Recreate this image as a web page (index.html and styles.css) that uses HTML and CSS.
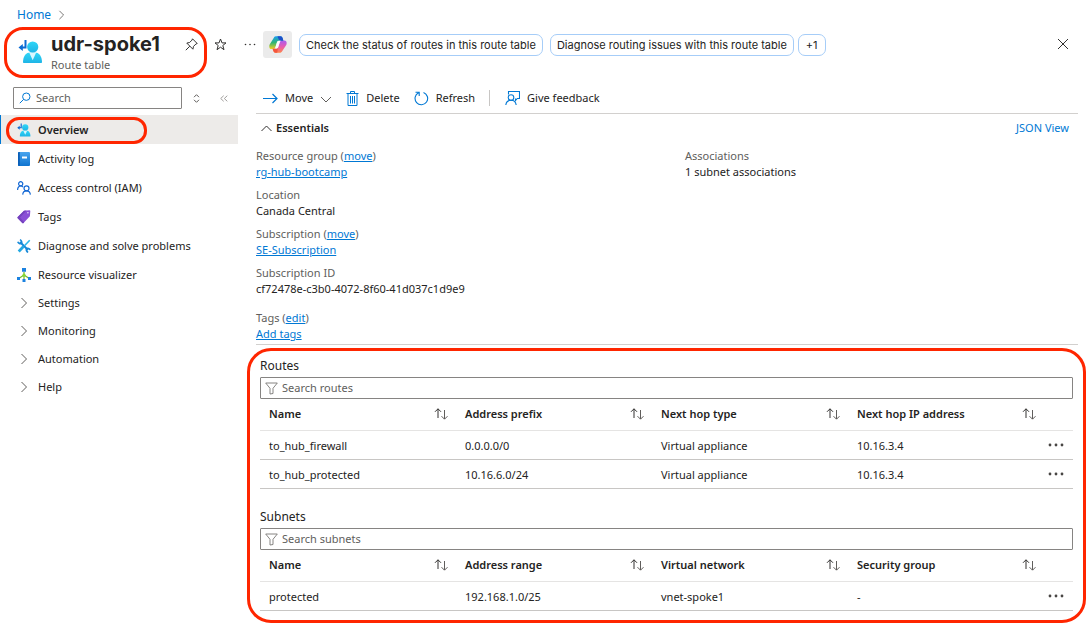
FILE: index.html
```html
<!DOCTYPE html>
<html lang="en">
<head>
<meta charset="utf-8">
<title>udr-spoke1 - Route table</title>
<link rel="stylesheet" href="styles.css">
</head>
<body>
<svg class="defs" aria-hidden="true">
  <defs>
    <linearGradient id="person" x1="0" y1="0" x2="0" y2="1"><stop offset="0" stop-color="#2fd6f7"/><stop offset="1" stop-color="#1fb4e6"/></linearGradient>
    <linearGradient id="blue" x1="0" y1="0" x2="0" y2="1"><stop offset="0" stop-color="#4aa5ee"/><stop offset="1" stop-color="#0f74d0"/></linearGradient>
    <linearGradient id="copilotA" x1="0" y1="0" x2="0" y2="1"><stop offset="0" stop-color="#1b9df0"/><stop offset=".5" stop-color="#2fb573"/><stop offset="1" stop-color="#f4cf1f"/></linearGradient>
    <linearGradient id="copilotB" x1="0" y1="0" x2="0" y2="1"><stop offset="0" stop-color="#a95cf0"/><stop offset=".5" stop-color="#e85bb0"/><stop offset="1" stop-color="#ff8548"/></linearGradient>
    <symbol id="i-route" viewBox="0 0 25 25">
      <path d="M7.500 1v7.500H2.500" fill="none" stroke="#0b6bd3" stroke-width="2"/>
      <path d="M.5 8.500 4.800 5v7z" fill="#0b6bd3"/>
      <path d="M5 23c0-5 2.500-8.700 5.500-9.200h8c3 .5 5.500 4.200 5.500 9.200 0 .6-.4 1-1 1H6c-.6 0-1-.4-1-1z" fill="url(#person)"/>
      <path d="M11.300 13.800h6.800l-3.400 7.400z" fill="#d9f7ff"/>
      <circle cx="14.700" cy="8" r="5.600" fill="url(#person)"/>
    </symbol>
    <symbol id="i-sort" viewBox="0 0 14 12">
      <path d="M4 10V.8M1 3.800l3-3 3 3" fill="none" stroke="#323130"/>
      <path d="M10.500 2v9M7.500 8.200l3 3 3-3" fill="none" stroke="#605e5c"/>
    </symbol>
    <symbol id="i-filter" viewBox="0 0 13 13"><path d="M.7 1h11.600L8 6.300v5.200L5 12V6.300z" fill="none" stroke="#797775" stroke-width=".9"/></symbol>
    <symbol id="i-more" viewBox="0 0 16 4"><circle cx="2" cy="2" r="1.400"/><circle cx="8" cy="2" r="1.400"/><circle cx="14" cy="2" r="1.400"/></symbol>
    <symbol id="i-chev" viewBox="0 0 8 12"><path d="m1.500 1 5 5-5 5" fill="none" stroke="#605e5c"/></symbol>
  </defs>
</svg>

<nav class="crumbs" aria-label="Breadcrumb">
  <a href="#">Home</a>
  <svg width="7" height="10"><use href="#i-chev"/></svg>
</nav>

<header class="header">
  <div class="title-box">
    <svg width="25" height="25"><use href="#i-route"/></svg>
    <div class="title-text">
      <h1>udr-spoke1</h1>
      <p>Route table</p>
    </div>
    <button class="icon-btn pin" aria-label="Pin">
      <svg width="13" height="13" viewBox="0 0 13 13" fill="none" stroke="#323130"><path d="m7.500.8 4.700 4.700-1.300.5L8.500 8.400l-.6 2.800L1.800 5.100l2.800-.6L7 2.100zM4.800 8.200.8 12.200"/></svg>
    </button>
  </div>
  <button class="icon-btn star" aria-label="Favorite">
    <svg width="13" height="13" viewBox="0 0 13 13" fill="none" stroke="#323130"><path d="m6.500 1 1.500 3.900h4L8.800 7.500l1.200 4.200-3.500-2.500L3 11.700l1.200-4.200L1 4.900h4z"/></svg>
  </button>
  <button class="icon-btn dots" aria-label="More">
    <svg width="12" height="3" viewBox="0 0 12 3" fill="#323130"><circle cx="1.500" cy="1.500" r=".8"/><circle cx="6" cy="1.500" r=".8"/><circle cx="10.500" cy="1.500" r=".8"/></svg>
  </button>
  <button class="copilot" aria-label="Copilot">
    <svg width="18" height="17" viewBox="0 0 18 17">
      <path d="M5 1.500C5.500.5 6.500.3 7.500.3h4c1.200 0 1.800.7 2.200 2l.7 2.400H10c-1.200 0-1.800.7-2.200 2L6.500 11c-.4 1.300-1 2-2.200 2H2.600C.6 13-.2 11.200.5 8.800z" fill="url(#copilotA)"/>
      <path d="M13 15.500c-.5 1-1.500 1.200-2.500 1.200h-4c-1.200 0-1.800-.7-2.200-2L3.600 12.800H7c1.200 0 2-.9 2.400-2.200l1.300-4.200c.4-1.200 1-1.800 2.200-1.800h2.500c2 0 2.700 1.700 2 4.100z" fill="url(#copilotB)"/>
      <path d="M8.500.3h3c1.200 0 1.800.7 2.200 2l.7 2.400h-3.200C9.700 4.700 9.200 2 8.500.3z" fill="#1c50c8"/>
      <path d="M3.600 12.800H7c.8 0 1.400-.4 1.900-1l-.6 4.900H6.500c-1.200 0-1.800-.7-2.200-2z" fill="#f4563c"/>
      <path d="M8.300 5.500c.5-.6 1-.8 1.700-.8h2c-.7.300-1 .9-1.300 1.700l-1.300 4.200c-.3.900-.7 1.500-1.300 1.900h-1c-.3 0-.8-.2-.8-.6l.2-.9 1.300-4.200z" fill="#fff" opacity=".85"/>
    </svg>
  </button>
  <button class="pill">Check the status of routes in this route table</button>
  <button class="pill">Diagnose routing issues with this route table</button>
  <button class="pill count">+1</button>
  <button class="icon-btn close" aria-label="Close">
    <svg width="12" height="12" viewBox="0 0 12 12" stroke="#323130"><path d="m1 1 10 10M11 1 1 11"/></svg>
  </button>
</header>

<div class="body">
  <aside class="sidebar">
    <div class="side-tools">
      <label class="search">
        <svg width="12" height="12" viewBox="0 0 12 12" fill="none" stroke="#0078d4"><circle cx="7.300" cy="4.700" r="3.700"/><path d="M4.600 7.400.8 11.200"/></svg>
        <input type="text" placeholder="Search" aria-label="Search menu">
      </label>
      <button class="icon-btn" aria-label="Expand all"><svg width="7" height="9" viewBox="0 0 7 9" fill="none" stroke="#605e5c"><path d="m1 3.200 2.500-2.500L6 3.200M1 5.800l2.500 2.500L6 5.800"/></svg></button>
      <button class="icon-btn collapse" aria-label="Collapse menu"><svg width="8" height="7" viewBox="0 0 8 7" fill="none" stroke="#a19f9d"><path d="m3.700.7-3 2.800 3 2.800M7.300.7l-3 2.800 3 2.800"/></svg></button>
    </div>
    <nav class="menu" aria-label="Resource menu">
      <a class="item current" href="#"><svg width="14" height="14"><use href="#i-route"/></svg>Overview</a>
      <a class="item" href="#"><svg width="14" height="14" viewBox="0 0 14 14"><rect x="1" width="12" height="14" rx="1" fill="url(#blue)"/><path d="M1 1a1 1 0 0 1 1-1h.8v14H2a1 1 0 0 1-1-1z" fill="#0a5fb8"/><path d="M5 4.500h5v2H5z" fill="#fff"/></svg>Activity log</a>
      <a class="item" href="#"><svg width="14" height="14" viewBox="0 0 14 14" fill="none" stroke="#1267d4" stroke-width="1.200"><circle cx="3.700" cy="2.800" r="2.100"/><path d="M.6 9C.6 6.500 1.800 5 3.700 5c1 0 1.700.3 2.300 1"/><circle cx="9.500" cy="7.300" r="2.500"/><path d="M5.700 13.600c.2-2.500 1.600-3.800 3.800-3.800s3.600 1.300 3.900 3.800"/></svg>Access control (IAM)</a>
      <a class="item" href="#"><svg width="14" height="14" viewBox="0 0 14 14"><path d="M7 .8 12.500.3c.5 0 .8.300.8.800l-.4 5.200L6.500 13c-.4.400-.8.400-1.200 0L.7 8.200c-.4-.4-.4-.8 0-1.200z" fill="#8a4fd6"/><path d="M7 .8 9.500.6 3 7.500l4.200 4.800-.7.700c-.4.400-.8.400-1.200 0L.7 8.200c-.4-.4-.4-.8 0-1.200z" fill="#7442bd"/><circle cx="10.900" cy="2.800" r=".8" fill="#e8dcfa"/></svg>Tags</a>
      <a class="item" href="#"><svg width="14" height="14" viewBox="0 0 14 14" fill="none"><path d="m3 3 8 8" stroke="#1689d8" stroke-width="2"/><path d="M.8 2.800a2.600 2.600 0 0 0 3.800 1.500M2.900.8a2.600 2.600 0 0 1 1.600 3.600M13.200 11a2.600 2.600 0 0 0-3.900-1.300m1.900 3.500a2.600 2.600 0 0 1-1.700-3.500" stroke="#1689d8" stroke-width="1.600"/><path d="M12.700 1.200 7.500 6.800" stroke="#2bb8ea" stroke-width="1.600"/><path d="M6.500 7.600 1.700 12.500" stroke="#23a9e2" stroke-width="2.800"/></svg>Diagnose and solve problems</a>
      <a class="item" href="#"><svg width="14" height="14" viewBox="0 0 14 14"><path d="M7 4v8M1.800 10.500 7 7l5.200 3.500" fill="none" stroke="#76bc2d" stroke-width="1.200"/><circle cx="7" cy="7.200" r="1.600" fill="#86d633"/><path d="M5 0h4v3.800H5zM0 9h3v3H0zM11 9h3v3h-3zM5.500 11h3v3h-3z" fill="#1c82e0"/></svg>Resource visualizer</a>
      <a class="item group" href="#"><svg width="14" height="12"><use href="#i-chev"/></svg>Settings</a>
      <a class="item group" href="#"><svg width="14" height="12"><use href="#i-chev"/></svg>Monitoring</a>
      <a class="item group" href="#"><svg width="14" height="12"><use href="#i-chev"/></svg>Automation</a>
      <a class="item group" href="#"><svg width="14" height="12"><use href="#i-chev"/></svg>Help</a>
    </nav>
  </aside>

  <main class="main">
    <div class="toolbar">
      <button class="tool"><svg width="15" height="11" viewBox="0 0 15 11" fill="none" stroke="#0078d4" stroke-width="1.200"><path d="M0 5.500h14M9.500 1 14 5.500 9.500 10"/></svg>Move<svg class="caret" width="12" height="7" viewBox="0 0 12 7" fill="none" stroke="#605e5c"><path d="m1 1 5 5 5-5"/></svg></button>
      <button class="tool"><svg width="13" height="15" viewBox="0 0 13 15" fill="none" stroke="#0078d4"><path d="M.5 2.500h12M4.500 2.500v-2h4v2M2 2.500v12h9v-12"/><path d="M4.500 5v7.500M6.500 5v7.500M8.500 5v7.500"/></svg>Delete</button>
      <button class="tool"><svg width="15" height="15" viewBox="0 0 15 15" fill="none" stroke="#0078d4" stroke-width="1.100"><path d="M9.500 1.500a6.300 6.300 0 1 1-5 .3M1.500 1.200h3.700v3.700"/></svg>Refresh</button>
      <span class="divider"></span>
      <button class="tool"><svg width="15" height="15" viewBox="0 0 15 15" fill="none" stroke="#0078d4" stroke-width="1.100"><path d="M3.500 3.500v-3h11v7h-2.200L10.500 9.500v-2"/><circle cx="6" cy="6.500" r="2.800"/><path d="M.8 14c.4-3 2.300-4.700 5.200-4.700s4.800 1.700 5.200 4.700"/></svg>Give feedback</button>
    </div>

    <section class="essentials">
      <div class="ess-head">
        <button class="ess-toggle"><svg width="11" height="7" viewBox="0 0 11 7" fill="none" stroke="#323130"><path d="m.5 6 5-5 5 5"/></svg>Essentials</button>
        <a class="json" href="#">JSON View</a>
      </div>
      <div class="ess-grid">
        <dl>
          <div><dt>Resource group (<a href="#">move</a>)</dt><dd><a href="#">rg-hub-bootcamp</a></dd></div>
          <div><dt>Location</dt><dd>Canada Central</dd></div>
          <div><dt>Subscription (<a href="#">move</a>)</dt><dd><a href="#">SE-Subscription</a></dd></div>
          <div><dt>Subscription ID</dt><dd>cf72478e-c3b0-4072-8f60-41d037c1d9e9</dd></div>
          <div class="tags"><dt>Tags (<a href="#">edit</a>)</dt><dd><a href="#">Add tags</a></dd></div>
        </dl>
        <dl>
          <div><dt>Associations</dt><dd>1 subnet associations</dd></div>
        </dl>
      </div>
    </section>

    <div class="lists">
      <section>
        <h2>Routes</h2>
        <label class="search wide"><svg width="13" height="13"><use href="#i-filter"/></svg><input type="text" placeholder="Search routes" aria-label="Search routes"></label>
        <table>
          <thead><tr>
            <th><button>Name<svg width="14" height="12"><use href="#i-sort"/></svg></button></th>
            <th><button>Address prefix<svg width="14" height="12"><use href="#i-sort"/></svg></button></th>
            <th><button>Next hop type<svg width="14" height="12"><use href="#i-sort"/></svg></button></th>
            <th><button>Next hop IP address<svg width="14" height="12"><use href="#i-sort"/></svg></button></th>
            <th class="act"></th>
          </tr></thead>
          <tbody>
            <tr><td>to_hub_firewall</td><td>0.0.0.0/0</td><td>Virtual appliance</td><td>10.16.3.4</td><td class="act"><button aria-label="More"><svg width="16" height="4"><use href="#i-more"/></svg></button></td></tr>
            <tr><td>to_hub_protected</td><td>10.16.6.0/24</td><td>Virtual appliance</td><td>10.16.3.4</td><td class="act"><button aria-label="More"><svg width="16" height="4"><use href="#i-more"/></svg></button></td></tr>
          </tbody>
        </table>
      </section>
      <section>
        <h2>Subnets</h2>
        <label class="search wide"><svg width="13" height="13"><use href="#i-filter"/></svg><input type="text" placeholder="Search subnets" aria-label="Search subnets"></label>
        <table>
          <thead><tr>
            <th><button>Name<svg width="14" height="12"><use href="#i-sort"/></svg></button></th>
            <th><button>Address range<svg width="14" height="12"><use href="#i-sort"/></svg></button></th>
            <th><button>Virtual network<svg width="14" height="12"><use href="#i-sort"/></svg></button></th>
            <th><button>Security group<svg width="14" height="12"><use href="#i-sort"/></svg></button></th>
            <th class="act"></th>
          </tr></thead>
          <tbody>
            <tr><td>protected</td><td>192.168.1.0/25</td><td>vnet-spoke1</td><td>-</td><td class="act"><button aria-label="More"><svg width="16" height="4"><use href="#i-more"/></svg></button></td></tr>
          </tbody>
        </table>
      </section>
    </div>
  </main>
</div>
</body>
</html>
```
FILE: styles.css
```css
*, *::after { box-sizing: border-box; }

body {
  margin: 0;
  background: #fff;
  color: #242322;
  font: 11px/16px "Noto Sans", "Open Sans", sans-serif;
}

h1, h2, p, dl, dd { margin: 0; }
a { color: #0078d4; }
svg { flex: none; display: block; }
.defs { position: absolute; width: 0; height: 0; }

button {
  padding: 0;
  border: 0;
  background: none;
  color: inherit;
  font: inherit;
  cursor: pointer;
}

.icon-btn { display: flex; align-items: center; justify-content: center; }

.crumbs {
  display: flex;
  align-items: center;
  gap: 7px;
  padding: 7px 17px 4px;
}
.crumbs a { font-size: 12px; text-decoration: none; }

.header {
  display: flex;
  align-items: flex-start;
  padding-right: 22px;
}
.title-box {
  display: flex;
  align-items: flex-start;
  width: 203px;
  height: 51px;
  margin-left: 4px;
  padding: 1px 6px 0 11px;
  border: 3px solid #ff2600;
  border-radius: 19px;
}
.title-box > svg { margin-top: 8px; }
.title-text { flex: 1; margin-left: 8px; }
.title-text h1 { font: 700 20px/26px Inter, sans-serif; }
.title-text p { line-height: 16px; color: #605e5c; }
.icon-btn { height: 34px; }
.title-box .pin { height: 26px; }
.star { margin-left: 7px; }
.dots { margin-left: 17px; }
.copilot {
  display: grid;
  place-items: center;
  width: 29px;
  height: 27px;
  margin: 4px 7px 0 7px;
  border-radius: 3px;
  background: #ebebeb;
}
.pill {
  height: 22px;
  margin: 7px 7px 0 0;
  padding: 0 6px;
  border: 1px solid #a6cdf8;
  border-radius: 7px;
  font: 11px/16px Inter, sans-serif;
  white-space: nowrap;
}
.pill.count { margin-left: -3px; padding: 0 7px; }
.close { margin-left: auto; }

.body { display: grid; grid-template-columns: 238px 1fr; }

.side-tools { display: flex; align-items: center; padding: 9px 9px 6px 13px; }
.search {
  display: flex;
  align-items: center;
  gap: 5px;
  width: 169px;
  height: 22px;
  padding: 0 5px;
  border: 1px solid #868482;
  border-radius: 1px;
}
.search input {
  flex: 1;
  min-width: 0;
  padding: 0;
  border: 0;
  outline: 0;
  background: none;
  font: inherit;
}
.search input::placeholder { color: #605e5c; opacity: 1; }
.side-tools .icon-btn { height: 22px; margin-left: 11px; }
.side-tools .collapse { margin-left: 20px; }

.item {
  position: relative;
  display: flex;
  align-items: center;
  gap: 7px;
  height: 29px;
  padding-left: 17px;
  color: #242322;
  text-decoration: none;
}
.item.group { height: 28px; }
.item.current { background: #edebe9; font-weight: 600; box-shadow: inset 1px 0 #0078d4; }
.item.current::after {
  content: "";
  position: absolute;
  top: 2px;
  left: 6px;
  width: 141px;
  height: 27px;
  border: 3px solid #ff2600;
  border-radius: 13px;
}

.main { min-width: 0; }
.toolbar {
  display: flex;
  align-items: center;
  height: 36px;
  margin: 0 13px 0 18px;
  padding: 5px 0 0 7px;
  border-bottom: 1px solid #d2d0ce;
}
.tool { display: flex; align-items: center; gap: 7px; margin-right: 14px; }
.caret { margin-top: 3px; }
.divider { width: 1px; height: 16px; margin-right: 15px; background: #c8c6c4; }

.essentials {
  margin: 0 13px 3px 18px;
  border-bottom: 1px solid #d2d0ce;
}
.ess-head {
  display: flex;
  align-items: center;
  justify-content: space-between;
  height: 28px;
  padding: 0 9px 0 5px;
}
.ess-toggle { display: flex; align-items: center; gap: 4px; font-weight: 600; }
.json { text-decoration: none; }
.ess-grid {
  display: grid;
  grid-template-columns: 429px 1fr;
  padding: 6px 0 2px;
}
dl { display: flex; flex-direction: column; gap: 7px; }
dt { color: #605e5c; }
.tags { margin-top: 6px; }

.lists {
  display: flex;
  flex-direction: column;
  gap: 19px;
  margin: 0 5px 0 9px;
  padding: 6px 10px 9px;
  border: 3px solid #ff2600;
  border-radius: 24px;
}
.lists h2 { margin-bottom: 2px; font-size: 12px; font-weight: 400; line-height: 18px; }
.search.wide { width: 100%; padding: 0 4px; gap: 4px; }

table { width: 100%; table-layout: fixed; border-collapse: separate; border-spacing: 0; }
th, td { padding: 0 8px 0 9px; text-align: left; }
th { height: 32px; padding-bottom: 1px; border-bottom: 1px solid #e5e4e3; font-weight: 600; }
th button { display: flex; align-items: center; justify-content: space-between; width: 100%; }
td { height: 29px; padding-top: 1px; border-bottom: 1px solid #c8c6c4; }
.act { width: 29px; padding: 0 9px 0 4px; }
.act button { display: flex; align-items: center; height: 16px; }
.act svg { fill: #484644; }
```
